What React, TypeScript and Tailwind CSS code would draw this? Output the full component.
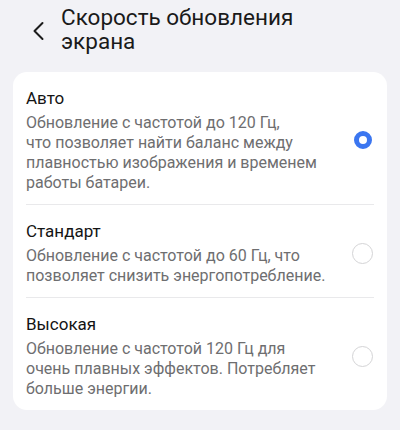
import React from "react";

type Opt = { title: string; desc: string[]; selected: boolean };

const options: Opt[] = [
  {
    title: "Авто",
    desc: [
      "Обновление с частотой до 120 Гц,",
      "что позволяет найти баланс между",
      "плавностью изображения и временем",
      "работы батареи.",
    ],
    selected: true,
  },
  {
    title: "Стандарт",
    desc: ["Обновление с частотой до 60 Гц, что", "позволяет снизить энергопотребление."],
    selected: false,
  },
  {
    title: "Высокая",
    desc: [
      "Обновление с частотой 120 Гц для",
      "очень плавных эффектов. Потребляет",
      "больше энергии.",
    ],
    selected: false,
  },
];

function Radio({ on }: { on: boolean }) {
  if (on) {
    return (
      <div className="flex h-[21px] w-[21px] items-center justify-center">
        <div className="h-[18px] w-[18px] rounded-full border-[5px] border-[#3b76f0] bg-white" />
      </div>
    );
  }
  return <div className="h-[21px] w-[21px] rounded-full border-[1.5px] border-[#d4d4d6] bg-white" />;
}

export default function App() {
  return (
    <div
      className="h-[430px] w-[400px] overflow-hidden bg-[#f2f2f6]"
      style={{ fontFamily: "Roboto, 'Noto Sans', sans-serif" }}
    >
      <div className="flex pt-[5px]">
        <div className="flex w-[61px] shrink-0 justify-start pl-[32px] pt-[16px]">
          <svg width="13" height="20" viewBox="0 0 13 20" fill="none">
            <path d="M10.5 2 L2.5 10 L10.5 18" stroke="#1c1c1c" strokeWidth="2" strokeLinecap="round" strokeLinejoin="round" />
          </svg>
        </div>
        <h1 className="text-[22.5px] leading-[24px] font-normal text-[#1a1a1a]">
          Скорость обновления
          <br />
          экрана
        </h1>
      </div>
      <div className="mx-[13px] mt-[19px] rounded-[14px] bg-white px-[13px]">
        {options.map((o, i) => (
          <div key={o.title}>
            {i > 0 && <div className="h-px bg-[#e9e9eb]" />}
            <div className="flex items-center justify-between pt-[15px] pb-[11px]">
              <div>
                <div className="text-[17px] leading-[22px] text-[#141414]">{o.title}</div>
                <div className="mt-[4px] text-[16px] leading-[20px] text-[#6e6e70]">
                  {o.desc.map((d, j) => (
                    <div key={j}>{d}</div>
                  ))}
                </div>
              </div>
              <div className="mr-[1px] flex items-center justify-center">
                <Radio on={o.selected} />
              </div>
            </div>
          </div>
        ))}
      </div>
    </div>
  );
}
